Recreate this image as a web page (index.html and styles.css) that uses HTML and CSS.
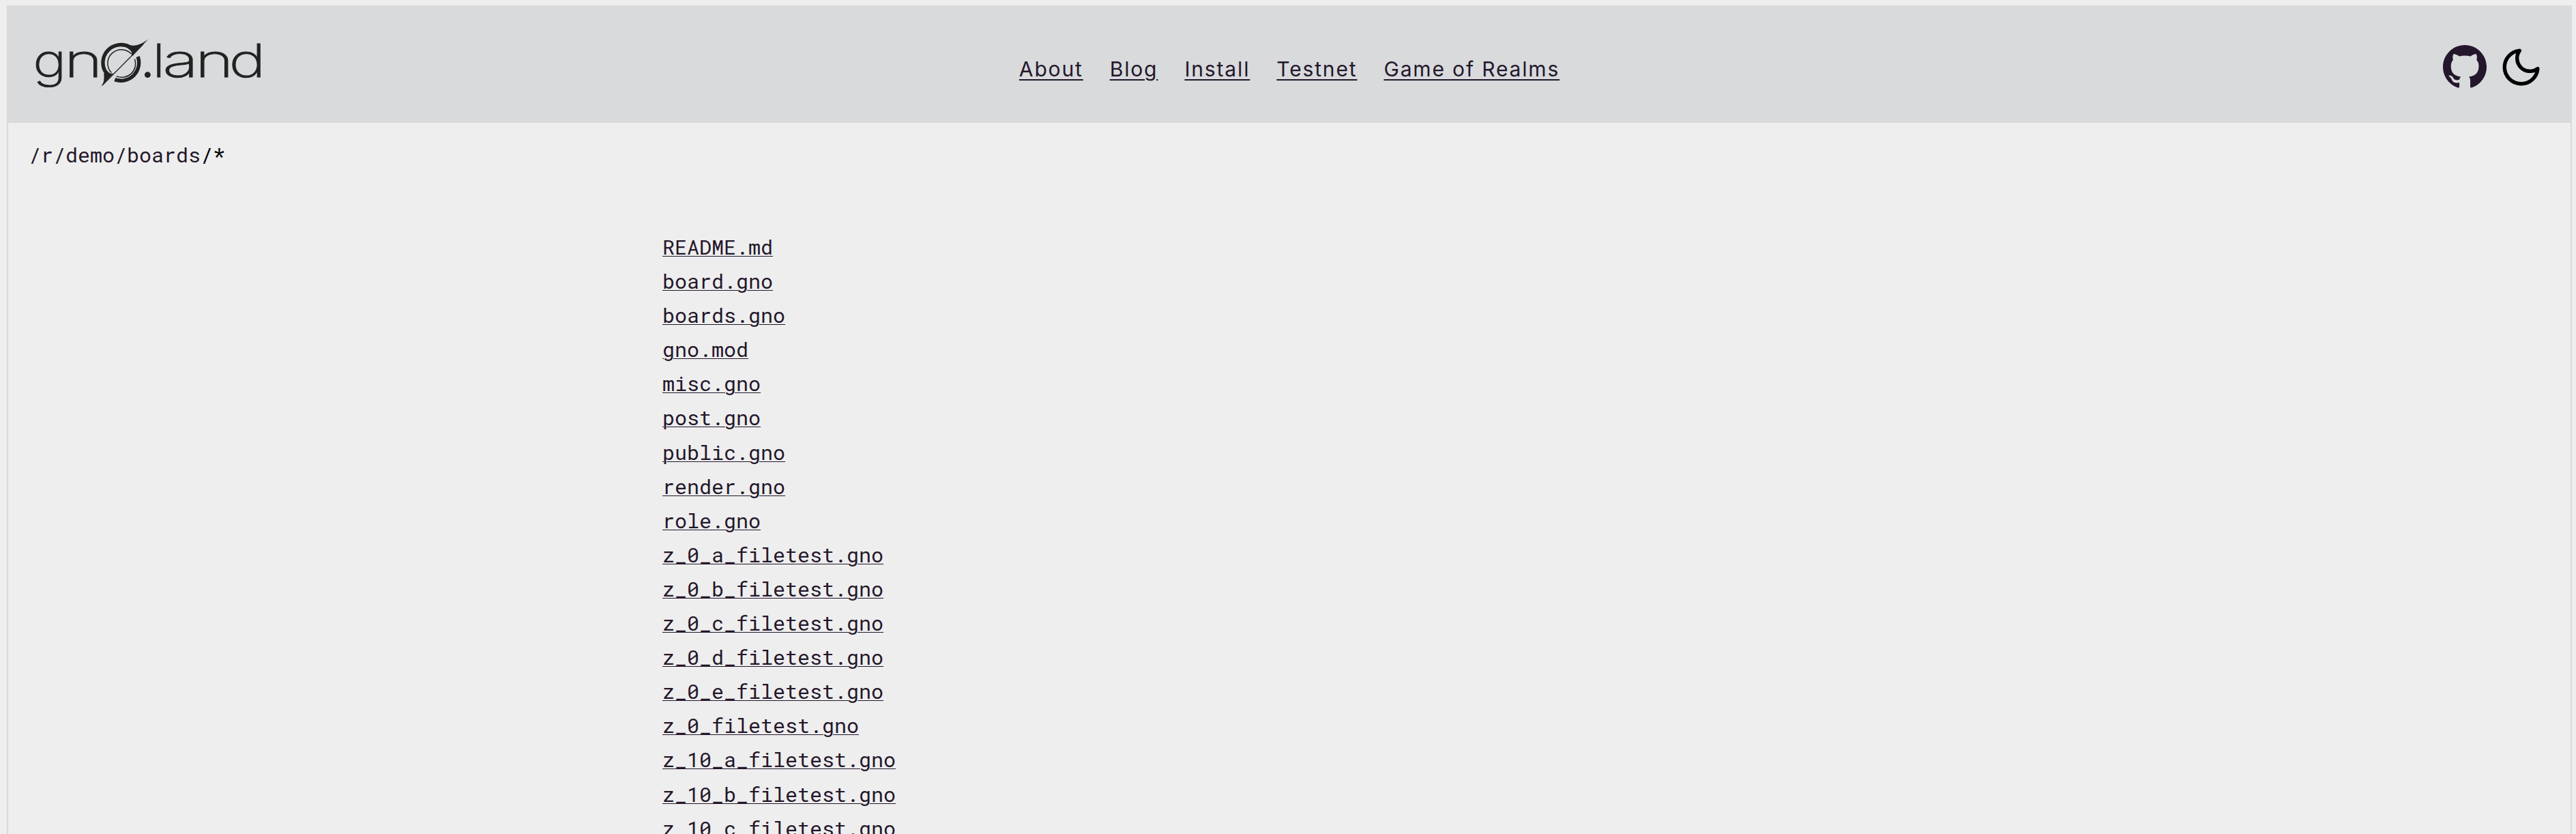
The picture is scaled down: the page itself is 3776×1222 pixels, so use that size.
FILE: index.html
```html
<!DOCTYPE html>
<html lang="en">
<head>
<meta charset="utf-8">
<title>gno.land</title>
<link rel="stylesheet" href="styles.css">
</head>
<body>
<div class="page">
  <header class="header">
    <a class="logo" href="#" aria-label="gno.land">
      <svg width="340" height="84" viewBox="50 54 340 84">
        <g class="logo-text">
          <text transform="translate(48.2 112.500) scale(1.240 1)">g</text>
          <text transform="translate(94 112.500) scale(1.440 1)">n</text>
          <text class="logo-dot" x="204.600" y="113.500">.</text>
          <text transform="translate(223 112.500) scale(1.300 1)">l</text>
          <text transform="translate(238.2 112.500) scale(1.460 1)">a</text>
          <text transform="translate(286 112.500) scale(1.440 1)">n</text>
          <text transform="translate(335.600 112.500) scale(1.360 1)">d</text>
        </g>
        <g class="logo-ring">
          <path stroke-width="5.400" d="M155.700 107A26.300 26.300 0 0 1 190.400 69.100M168.300 116.600A26.300 26.300 0 0 0 202.100 83"/>
          <path stroke-width="1.500" d="M163.300 106.500A20 20 0 0 1 192.500 79M170.700 111.600A20 20 0 0 0 197.500 86.500"/>
          <path stroke-width="1.300" d="M210 64.700L150 125"/>
        </g>
        <path fill="#222" d="M185 63.500C190 66.500 194 67.300 198 66.500C206 65.500 211 62 217.300 57.300L194.500 81.800L192.500 80.500C194.500 77 192 74 188 71.500ZM143.300 131.700C149 126.500 152 121.500 152.300 117C152.500 113 153 111 152 108.500L157 103.500C159 106 161 108.500 166.500 107.600Z"/>
      </svg>
    </a>
    <nav class="nav">
      <a href="#">About</a><a href="#">Blog</a><a href="#">Install</a><a href="#">Testnet</a><a href="#">Game of Realms</a>
    </nav>
    <div class="actions">
      <svg class="github" viewBox="0 0 16 15.700" preserveAspectRatio="none"><path d="M8 0C3.580 0 0 3.580 0 8c0 3.540 2.290 6.530 5.470 7.590.4.070.55-.17.55-.38 0-.19-.01-.82-.01-1.490-2.010.37-2.530-.49-2.690-.94-.09-.23-.48-.94-.82-1.130-.28-.15-.68-.52-.01-.53.63-.01 1.080.58 1.230.82.72 1.210 1.870.87 2.330.66.070-.52.280-.87.510-1.070-1.780-.2-3.640-.89-3.640-3.950 0-.87.310-1.590.820-2.150-.08-.2-.36-1.020.080-2.120 0 0 .67-.21 2.200.82.640-.18 1.320-.27 2-.27s1.360.09 2 .27c1.530-1.040 2.200-.82 2.200-.82.440 1.100.160 1.920.080 2.120.510.560.820 1.270.820 2.150 0 3.070-1.870 3.750-3.650 3.950.290.250.540.730.540 1.480 0 1.070-.01 1.930-.01 2.200 0 .210.150.460.550.380A8.010 8.010 0 0 0 16 8c0-4.420-3.580-8-8-8z"/></svg>
      <svg class="moon" viewBox="0 0 24 24"><path d="M21 12.790A9 9 0 1 1 11.210 3 7 7 0 0 0 21 12.790z"/></svg>
    </div>
  </header>
  <main class="content">
    <div class="path"><a href="#">/r/demo/boards</a>/*</div>
    <ul class="files">
      <li><a href="#">README.md</a></li>
      <li><a href="#">board.gno</a></li>
      <li><a href="#">boards.gno</a></li>
      <li><a href="#">gno.mod</a></li>
      <li><a href="#">misc.gno</a></li>
      <li><a href="#">post.gno</a></li>
      <li><a href="#">public.gno</a></li>
      <li><a href="#">render.gno</a></li>
      <li><a href="#">role.gno</a></li>
      <li><a href="#">z_0_a_filetest.gno</a></li>
      <li><a href="#">z_0_b_filetest.gno</a></li>
      <li><a href="#">z_0_c_filetest.gno</a></li>
      <li><a href="#">z_0_d_filetest.gno</a></li>
      <li><a href="#">z_0_e_filetest.gno</a></li>
      <li><a href="#">z_0_filetest.gno</a></li>
      <li><a href="#">z_10_a_filetest.gno</a></li>
      <li><a href="#">z_10_b_filetest.gno</a></li>
      <li><a href="#">z_10_c_filetest.gno</a></li>
    </ul>
  </main>
</div>
</body>
</html>
```
FILE: styles.css
```css
* { box-sizing: border-box; }
html, body { height: 100%; margin: 0; }
body {
  background: #eee;
  color: #000;
  overflow: hidden;
  padding: 8px 6px 0 10px;
  font-family: "Roboto Mono", "Liberation Mono", monospace;
  font-size: 30px;
}
a { color: #24172b; }
.page {
  height: 100%;
  border: solid #d8dadc;
  border-width: 0 2px;
}
.header {
  height: 172px;
  background: #d8dadc;
  display: grid;
  grid-template-columns: 1fr auto 1fr;
  align-items: start;
  padding: 0 40px 0 38px;
}
.logo { display: block; margin-top: 46px; height: 84px; }
.logo svg { display: block; overflow: visible; }
.logo-text {
  font-family: Inter, sans-serif;
  font-weight: 200;
  font-size: 67px;
  fill: #222;
  stroke: #222;
  stroke-width: .8;
}
.logo-dot { font-size: 84px; font-weight: 300; stroke: none; }
.logo-ring { fill: none; stroke: #222; }
.nav {
  display: flex;
  gap: 39px;
  margin: 73px 0 0 2px;
  font: 400 30px/40px Inter, sans-serif;
  letter-spacing: 1.850px;
}
.nav a { text-decoration-thickness: 2px; text-underline-offset: 4px; }
.actions {
  display: flex;
  justify-content: flex-end;
  gap: 17.600px;
  padding-top: 57.500px;
}
.github { width: 64px; height: 63px; fill: #24172b; }
.moon {
  width: 65px;
  height: 65px;
  fill: none;
  stroke: #000;
  stroke-width: 2;
  stroke-linecap: round;
  stroke-linejoin: round;
}
.path { padding: 27px 0 0 30px; line-height: 40px; }
.path a { text-decoration: none; }
.files {
  list-style: none;
  margin: 90px 0 0;
  padding: 0 0 0 959px;
  line-height: 50.100px;
}
.files a { text-decoration-thickness: 1px; text-underline-offset: 2px; }
```
